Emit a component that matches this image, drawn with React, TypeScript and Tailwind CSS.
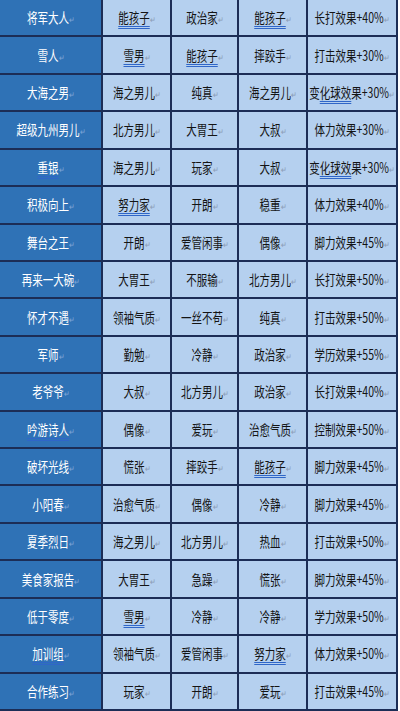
import React from 'react';

type Cell = { t: string; u?: boolean; part?: [string, string, string] };

const rows: Cell[][] = [
  [{ t: '将军大人' }, { t: '能孩子', u: true }, { t: '政治家' }, { t: '能孩子', u: true }, { t: '长打效果+40%' }],
  [{ t: '雪人' }, { t: '雪男', u: true }, { t: '能孩子', u: true }, { t: '摔跤手' }, { t: '打击效果+30%' }],
  [{ t: '大海之男' }, { t: '海之男儿' }, { t: '纯真' }, { t: '海之男儿' }, { t: '', part: ['变', '化球效', '果+30%'] }],
  [{ t: '超级九州男儿' }, { t: '北方男儿' }, { t: '大胃王' }, { t: '大叔' }, { t: '体力效果+30%' }],
  [{ t: '重银', u: true }, { t: '海之男儿' }, { t: '玩家' }, { t: '大叔' }, { t: '', part: ['变', '化球效', '果+30%'] }],
  [{ t: '积极向上' }, { t: '努力家', u: true }, { t: '开朗' }, { t: '稳重' }, { t: '体力效果+40%' }],
  [{ t: '舞台之王' }, { t: '开朗' }, { t: '爱管闲事' }, { t: '偶像' }, { t: '脚力效果+45%' }],
  [{ t: '再来一大碗' }, { t: '大胃王' }, { t: '不服输' }, { t: '北方男儿' }, { t: '长打效果+50%' }],
  [{ t: '怀才不遇' }, { t: '领袖气质' }, { t: '一丝不苟' }, { t: '纯真' }, { t: '打击效果+50%' }],
  [{ t: '军师' }, { t: '勤勉' }, { t: '冷静' }, { t: '政治家' }, { t: '学历效果+55%' }],
  [{ t: '老爷爷' }, { t: '大叔' }, { t: '北方男儿' }, { t: '政治家' }, { t: '长打效果+40%' }],
  [{ t: '吟游诗人', u: true }, { t: '偶像' }, { t: '爱玩' }, { t: '治愈气质' }, { t: '控制效果+50%' }],
  [{ t: '破坏光线' }, { t: '慌张' }, { t: '摔跤手' }, { t: '能孩子', u: true }, { t: '脚力效果+45%' }],
  [{ t: '小阳春' }, { t: '治愈气质' }, { t: '偶像' }, { t: '冷静' }, { t: '脚力效果+45%' }],
  [{ t: '夏季烈日' }, { t: '海之男儿' }, { t: '北方男儿' }, { t: '热血' }, { t: '打击效果+50%' }],
  [{ t: '美食家报告' }, { t: '大胃王' }, { t: '急躁' }, { t: '慌张' }, { t: '脚力效果+45%' }],
  [{ t: '低于零度' }, { t: '雪男', u: true }, { t: '冷静' }, { t: '冷静' }, { t: '学力效果+50%' }],
  [{ t: '加训组', u: true }, { t: '领袖气质' }, { t: '爱管闲事' }, { t: '努力家', u: true }, { t: '体力效果+50%' }],
  [{ t: '合作练习' }, { t: '玩家' }, { t: '开朗' }, { t: '爱玩' }, { t: '打击效果+45%' }],
];

const uline = 'underline decoration-double decoration-[#2f66c8] decoration-1 underline-offset-[3px]';

function CellText({ cell, head }: { cell: Cell; head: boolean }) {
  return (
    <span className="inline-block scale-x-[0.75] whitespace-nowrap">
      {cell.part ? (
        <>
          {cell.part[0]}
          <span className={uline}>{cell.part[1]}</span>
          {cell.part[2]}
        </>
      ) : (
        <span className={cell.u ? uline : ''}>{cell.t}</span>
      )}
      <span className={`text-[9px] ${head ? 'text-[#7fa6d8]' : 'text-[#8a9ab4]'}`}>↵</span>
    </span>
  );
}

export default function App() {
  return (
    <div className="w-[400px] h-[711px] bg-white">
      <div
        className="w-[398px] h-[711px] bg-[#1c2d56] grid grid-cols-[101px_67px_65px_67px_88px] grid-rows-[repeat(19,minmax(0,1fr))] gap-[2px] pr-[2px] pb-[2px] text-[14px]"
        style={{ fontFamily: '"Noto Sans CJK SC", "Noto Sans", sans-serif' }}
      >
        {rows.map((row, r) =>
          row.map((cell, c) => (
            <div
              key={`${r}-${c}`}
              className={`flex items-center justify-center ${
                c === 0 ? 'bg-[#2f72b6] text-white' : 'bg-[#b5d0ef] text-[#141414]'
              }`}
            >
              <CellText cell={cell} head={c === 0} />
            </div>
          ))
        )}
      </div>
    </div>
  );
}
